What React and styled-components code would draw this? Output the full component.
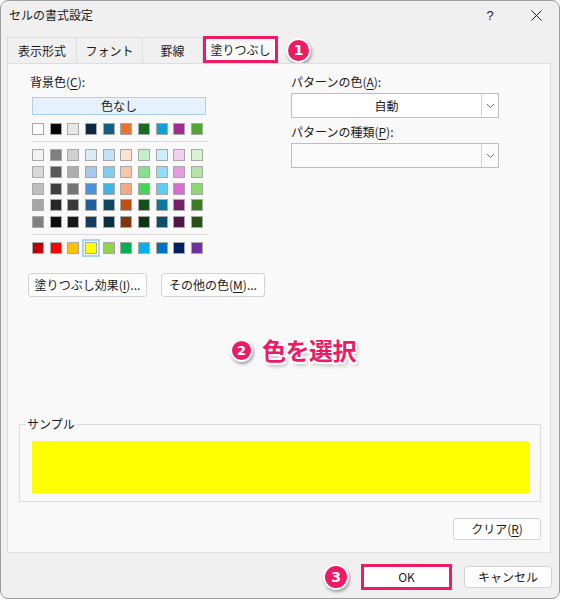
import React from 'react'
import styled, { createGlobalStyle } from 'styled-components'

const PINK = '#ec1b63'
const UI_FONT = '"Noto Sans CJK JP", "Noto Sans", sans-serif'

const themeRow = ['#ffffff', '#000000', '#e8e8e8', '#0e2841', '#156082', '#e97132', '#196b24', '#0f9ed5', '#a02b93', '#4ea72e']

const tintRows = [
  ['#f2f2f2', '#7f7f7f', '#d0d0d0', '#dceaf7', '#c0e4f5', '#fbe2d5', '#c1f0c8', '#caeefb', '#f2cfee', '#daf2d0'],
  ['#d9d9d9', '#595959', '#aeaeae', '#a6c9ec', '#83cceb', '#f7c7ac', '#83e28e', '#95dcf7', '#e59edd', '#b4e5a2'],
  ['#bfbfbf', '#404040', '#757575', '#4d93d9', '#44b3e1', '#f2aa84', '#47d45a', '#61cbf3', '#d86dcd', '#8ed973'],
  ['#a6a6a6', '#262626', '#3a3a3a', '#215f9a', '#104862', '#c04f15', '#124f1a', '#0b769f', '#76206c', '#3a7c22'],
  ['#808080', '#0d0d0d', '#171717', '#153d64', '#0a3041', '#80350e', '#0d3512', '#074f6a', '#501549', '#275317'],
]

const standardRow = ['#c00000', '#ff0000', '#ffc000', '#ffff00', '#92d050', '#00b050', '#00b0f0', '#0070c0', '#002060', '#7030a0']

const GlobalStyle = createGlobalStyle`
  body {
    margin: 0;
    background: #ffffff;
    font-family: ${UI_FONT};
  }
`

const Window = styled.div`
  position: relative;
  width: 560px;
  height: 599px;
  box-sizing: border-box;
  border: 1px solid #9c9c9c;
  border-radius: 8px;
  background: #f0f0f0;
  display: flex;
  flex-direction: column;
  overflow: hidden;
  font-size: 12px;
  color: #1a1a1a;
`

const TitleBar = styled.div`
  height: 36px;
  box-sizing: border-box;
  padding: 0 0 8px 8px;
  display: flex;
  align-items: center;
`

const Title = styled.div`
  flex: 1;
  font-size: 12px;
  line-height: 16px;
`

const CaptionButton = styled.div`
  width: 46px;
  height: 28px;
  display: flex;
  align-items: center;
  justify-content: center;
  font-family: "Liberation Sans", sans-serif;
  font-size: 13px;
`

const TabRow = styled.div`
  height: 26px;
  padding-left: 6px;
  display: flex;
  align-items: stretch;
`

const Tab = styled.div`
  width: ${p => p.$w}px;
  box-sizing: border-box;
  display: flex;
  align-items: center;
  justify-content: center;
  line-height: 16px;
  border-top: 1px solid #dedede;
  border-right: 1px solid #dedede;
  ${p => p.$first && 'border-left: 1px solid #dedede;'}
  ${p => p.$active && `
    border: 3px solid ${PINK};
    margin-top: -1px;
    background: #f9f9f9;
    position: relative;
    z-index: 1;
  `}
`

const StepBadge = styled.div`
  width: ${p => p.$size}px;
  height: ${p => p.$size}px;
  flex: none;
  box-sizing: border-box;
  border-radius: 50%;
  border: 2px solid #ffffff;
  background: ${PINK};
  color: #ffffff;
  display: flex;
  align-items: center;
  justify-content: center;
  font-family: "DejaVu Sans", sans-serif;
  font-weight: 700;
  font-size: ${p => Math.round(p.$size * 0.55)}px;
  box-shadow: 1px 2px 3px rgba(0, 0, 0, 0.35);
  align-self: center;
  margin-left: ${p => p.$ml || 0}px;
  margin-right: ${p => p.$mr || 0}px;
`

const Panel = styled.div`
  margin: 0 8px 0 6px;
  height: 490px;
  box-sizing: border-box;
  border: 1px solid #dedede;
  background: #f9f9f9;
  padding: 10px 9px 0 11px;
  display: flex;
  flex-direction: column;
`

const Top = styled.div`
  display: flex;
  padding-left: 11px;
`

const LeftCol = styled.div`
  width: 261px;
  display: flex;
  flex-direction: column;
`

const RightCol = styled.div`
  width: 208px;
  display: flex;
  flex-direction: column;
`

const FieldLabel = styled.div`
  line-height: 16px;
  margin-top: ${p => p.$mt || 0}px;

  u {
    text-underline-offset: 2px;
  }
`

const NoneButton = styled.div`
  margin: 7px 0 0 2px;
  width: 174px;
  height: 18px;
  box-sizing: border-box;
  border: 1px solid #a9d0f0;
  background: #e5f1fb;
  display: flex;
  align-items: center;
  justify-content: center;
  line-height: 16px;
`

const SwatchGrid = styled.div`
  margin: ${p => p.$mt}px 0 0 2px;
  display: grid;
  grid-template-columns: repeat(10, 12px);
  column-gap: 5.67px;
  row-gap: 4.75px;
`

const Swatch = styled.div`
  width: 12px;
  height: 12px;
  box-sizing: border-box;
  border: 1px solid #a8a8a8;
  background: ${p => p.$color};
  ${p => p.$selected && 'outline: 2px solid #a9d2f3; outline-offset: 1px;'}
`

const Divider = styled.div`
  margin: ${p => p.$mt}px 0 0 2px;
  width: 176px;
  height: 1px;
  background: #dadada;
`

const ActionRow = styled.div`
  margin: 19px 0 0 -2px;
  display: flex;
  gap: 14px;
`

const PushButton = styled.div`
  width: ${p => p.$w}px;
  height: ${p => p.$h || 24}px;
  box-sizing: border-box;
  border: 1px solid #d3d3d3;
  border-radius: 3px;
  background: #fdfdfd;
  display: flex;
  align-items: center;
  justify-content: center;
  line-height: 16px;
  white-space: nowrap;

  u {
    text-underline-offset: 2px;
  }
`

const Select = styled.div`
  margin-top: 3px;
  height: 25px;
  box-sizing: border-box;
  border: 1px solid #bdbdbd;
  background: ${p => (p.$disabled ? '#fbfbfb' : '#ffffff')};
  display: flex;
`

const SelectValue = styled.div`
  flex: 1;
  display: flex;
  align-items: center;
  justify-content: center;
  line-height: 16px;
`

const SelectArrow = styled.div`
  width: 16px;
  border-left: 1px solid #d4d4d4;
  display: flex;
  align-items: center;
  justify-content: center;
`

const Annotation = styled.div`
  position: absolute;
  left: 229px;
  top: 334px;
  display: flex;
  align-items: center;
  gap: 9px;
`

const AnnotationText = styled.div`
  font-family: "Noto Sans CJK JP", sans-serif;
  font-weight: 700;
  font-size: 24px;
  line-height: 30px;
  color: ${PINK};
  letter-spacing: -0.5px;
  text-shadow:
    2px 0 0 #fff, -2px 0 0 #fff, 0 2px 0 #fff, 0 -2px 0 #fff,
    1.5px 1.5px 0 #fff, -1.5px 1.5px 0 #fff, 1.5px -1.5px 0 #fff, -1.5px -1.5px 0 #fff,
    2px 3px 4px rgba(0, 0, 0, 0.35);
`

const GroupBox = styled.fieldset`
  margin: 119px 0 0 0;
  padding: 0;
  min-inline-size: 0;
  border: 1px solid #dcdcdc;
`

const GroupLegend = styled.legend`
  margin-left: 6px;
  padding: 0 1px;
  line-height: 16px;
`

const SampleFill = styled.div`
  margin: 9px 11px 8px 12px;
  height: 52px;
  background: #ffff00;
`

const ClearRow = styled.div`
  margin-top: 16px;
  display: flex;
  justify-content: flex-end;
`

const Footer = styled.div`
  flex: 1;
  padding: 3px 7px 0 0;
  display: flex;
  align-items: center;
  justify-content: flex-end;
`

const OkButton = styled(PushButton)`
  border: 3px solid ${PINK};
  border-radius: 0;
  background: #ffffff;
  margin-right: 12px;
`

const Chevron = () => (
  <svg width="9" height="6" viewBox="0 0 9 6">
    <path d="M1 1 L4.5 4.5 L8 1" fill="none" stroke="#707070" strokeWidth="1" />
  </svg>
)

const CloseIcon = () => (
  <svg width="11" height="11" viewBox="0 0 11 11">
    <path d="M0.5 0.5 L10.5 10.5 M10.5 0.5 L0.5 10.5" stroke="#1a1a1a" strokeWidth="1" />
  </svg>
)

export default function App() {
  return (
    <>
      <GlobalStyle />
      <Window>
        <TitleBar>
          <Title>セルの書式設定</Title>
          <CaptionButton>?</CaptionButton>
          <CaptionButton><CloseIcon /></CaptionButton>
        </TitleBar>

        <TabRow>
          <Tab $w={70} $first>表示形式</Tab>
          <Tab $w={66}>フォント</Tab>
          <Tab $w={60}>罫線</Tab>
          <Tab $w={75} $active>塗りつぶし</Tab>
          <StepBadge $size={25} $ml={8}>1</StepBadge>
        </TabRow>

        <Panel>
          <Top>
            <LeftCol>
              <FieldLabel>背景色(<u>C</u>):</FieldLabel>
              <NoneButton>色なし</NoneButton>
              <SwatchGrid $mt={8}>
                {themeRow.map(c => <Swatch key={c} $color={c} />)}
              </SwatchGrid>
              <Divider $mt={6} />
              <SwatchGrid $mt={7}>
                {tintRows.flat().map((c, i) => <Swatch key={i} $color={c} />)}
              </SwatchGrid>
              <Divider $mt={6} />
              <SwatchGrid $mt={7}>
                {standardRow.map(c => <Swatch key={c} $color={c} $selected={c === '#ffff00'} />)}
              </SwatchGrid>
              <ActionRow>
                <PushButton $w={119}>塗りつぶし効果(<u>I</u>)...</PushButton>
                <PushButton $w={104}>その他の色(<u>M</u>)...</PushButton>
              </ActionRow>
            </LeftCol>

            <RightCol>
              <FieldLabel>パターンの色(<u>A</u>):</FieldLabel>
              <Select>
                <SelectValue>自動</SelectValue>
                <SelectArrow><Chevron /></SelectArrow>
              </Select>
              <FieldLabel $mt={6}>パターンの種類(<u>P</u>):</FieldLabel>
              <Select $disabled>
                <SelectValue />
                <SelectArrow><Chevron /></SelectArrow>
              </Select>
            </RightCol>
          </Top>

          <GroupBox>
            <GroupLegend>サンプル</GroupLegend>
            <SampleFill />
          </GroupBox>

          <ClearRow>
            <PushButton $w={88} $h={22}>クリア(<u>R</u>)</PushButton>
          </ClearRow>
        </Panel>

        <Footer>
          <StepBadge $size={26} $mr={12}>3</StepBadge>
          <OkButton $w={91} $h={26}>OK</OkButton>
          <PushButton $w={88} $h={22}>キャンセル</PushButton>
        </Footer>

        <Annotation>
          <StepBadge $size={23}>2</StepBadge>
          <AnnotationText>色を選択</AnnotationText>
        </Annotation>
      </Window>
    </>
  )
}
